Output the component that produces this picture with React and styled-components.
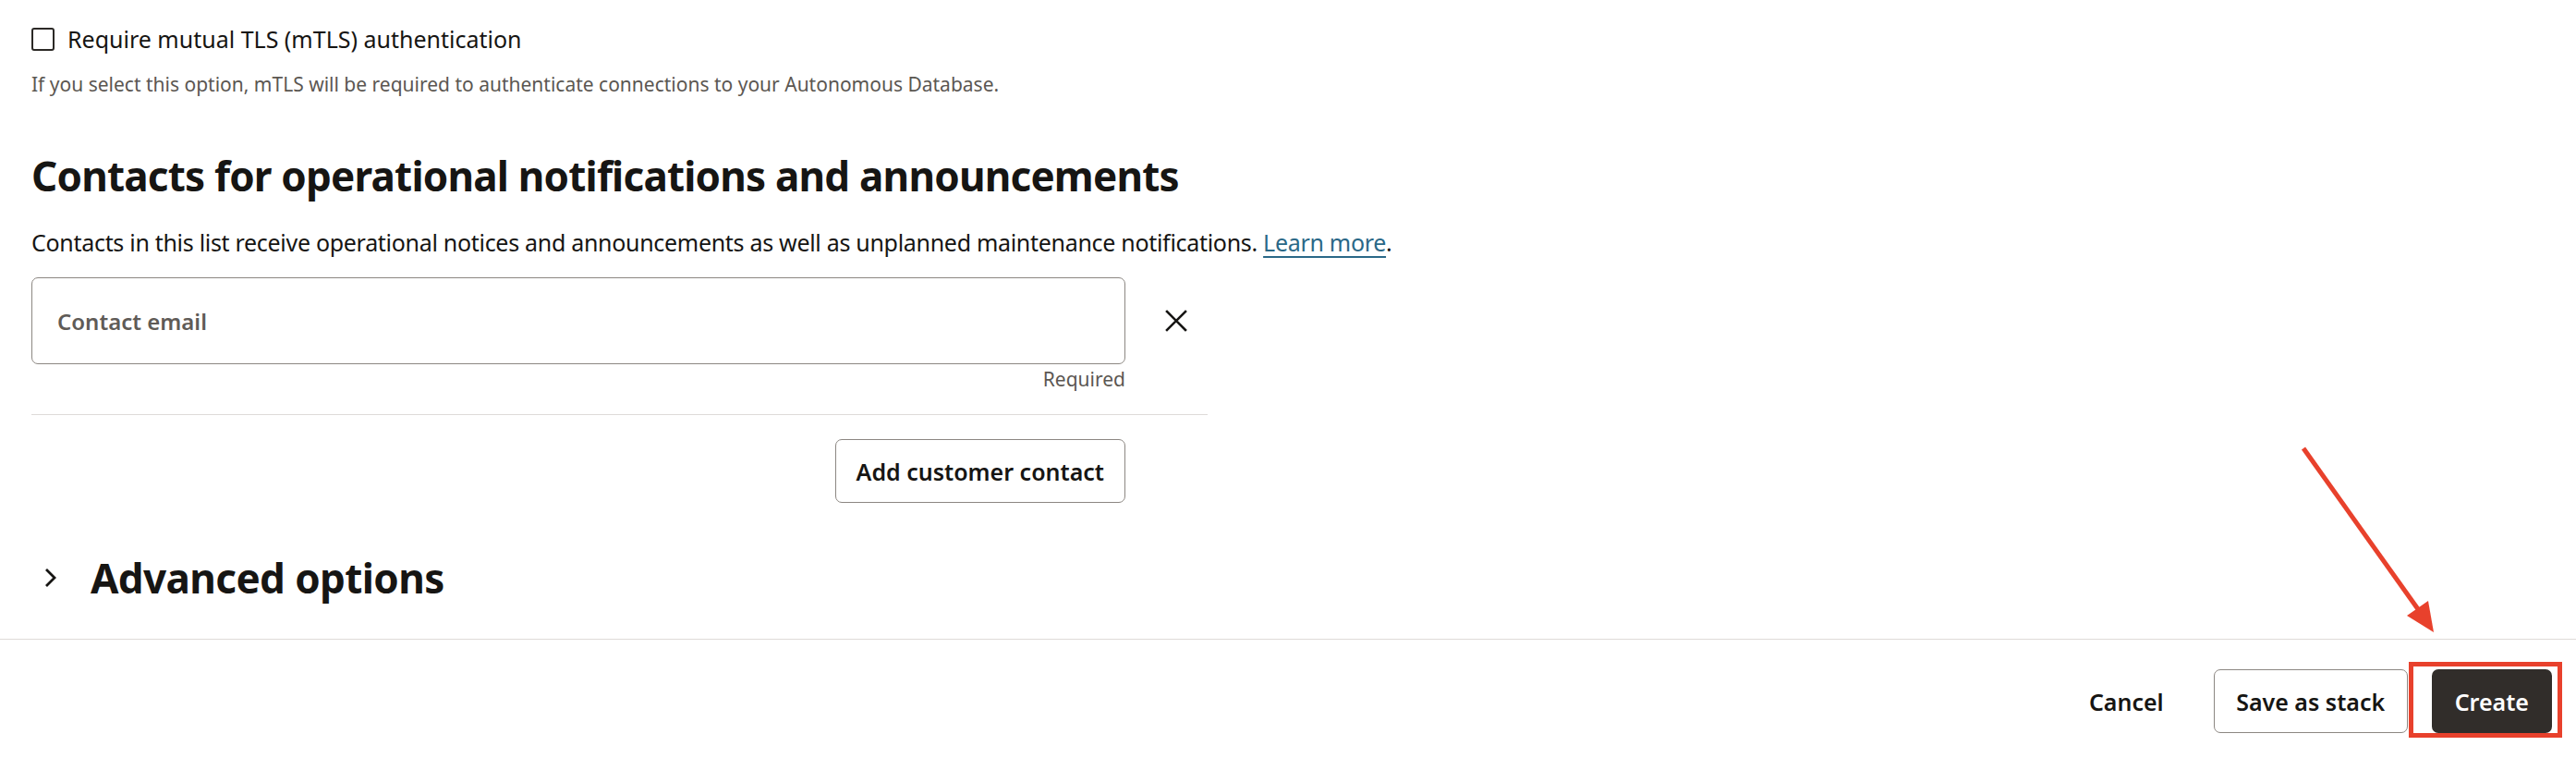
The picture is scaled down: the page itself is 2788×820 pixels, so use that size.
import React from "react";
import styled, { createGlobalStyle } from "styled-components";

const GlobalStyle = createGlobalStyle`
  html, body {
    margin: 0;
    padding: 0;
    background: #ffffff;
  }
  body {
    font-family: "Noto Sans", "Open Sans", sans-serif;
    color: #161513;
  }
`;

const Page = styled.div`
  position: relative;
  display: flex;
  flex-direction: column;
  width: 2788px;
  height: 820px;
  overflow: hidden;
`;

const Content = styled.div`
  flex: 1;
  min-height: 0;
  overflow: hidden;
  padding: 30px 0 0 34px;
`;

const Column = styled.div`
  width: 1273px;
  display: flex;
  flex-direction: column;
`;

const CheckRow = styled.label`
  display: flex;
  align-items: center;
  gap: 14px;
  height: 24px;
  font-size: 25px;
  line-height: 24px;
`;

const CheckBox = styled.span`
  width: 21px;
  height: 21px;
  border: 2px solid #2b2926;
  border-radius: 3px;
  flex: none;
`;

const Helper = styled.p`
  margin: 21px 0 0;
  font-size: 21px;
  line-height: 32px;
  color: #5b5752;
`;

const SectionTitle = styled.h2`
  margin: 55px 0 0;
  font-size: 44px;
  line-height: 56px;
  font-weight: 700;
  letter-spacing: -0.8px;
  white-space: nowrap;
`;

const Intro = styled.p`
  margin: 26px 0 0;
  font-size: 25px;
  line-height: 36px;
  letter-spacing: -0.3px;
  white-space: nowrap;
`;

const Link = styled.a`
  color: #2a6887;
  text-decoration: underline;
  text-decoration-thickness: 2px;
  text-underline-offset: 5px;
`;

const FieldRow = styled.div`
  display: flex;
  gap: 20px;
  margin-top: 20px;
`;

const Field = styled.div`
  flex: 1;
  display: flex;
  flex-direction: column;
  align-items: flex-end;
`;

const Input = styled.div`
  box-sizing: border-box;
  width: 100%;
  height: 94px;
  border: 1.5px solid #8c8782;
  border-radius: 7px;
  display: flex;
  align-items: center;
  padding-left: 27px;
  font-size: 24px;
  font-weight: 600;
  color: #5f5b57;
`;

const Hint = styled.span`
  margin-top: 2px;
  font-size: 21px;
  line-height: 28px;
  color: #5b5752;
`;

const IconButton = styled.button`
  width: 69px;
  height: 94px;
  border: 0;
  background: none;
  padding: 0;
  display: flex;
  align-items: center;
  justify-content: center;
  color: #161513;
`;

const Divider = styled.div`
  margin-top: 24px;
  height: 1px;
  background: #dedbd8;
`;

const AddRow = styled.div`
  display: flex;
  justify-content: flex-end;
  padding-right: 89px;
  margin-top: 26px;
`;

const Button = styled.button`
  box-sizing: border-box;
  height: 69px;
  padding: 0 ${(p) => p.$pad || 27}px;
  border-radius: 7px;
  font-family: "Noto Sans", "Open Sans", sans-serif;
  font-size: 25px;
  font-weight: 600;
  white-space: nowrap;
  cursor: pointer;
  border: ${(p) =>
    p.$variant === "ghost" || p.$variant === "primary"
      ? "1.5px solid transparent"
      : "1.5px solid #8c8782"};
  background: ${(p) => (p.$variant === "primary" ? "#312d2a" : "#ffffff")};
  color: ${(p) => (p.$variant === "primary" ? "#ffffff" : "#161513")};
`;

const Advanced = styled.div`
  display: flex;
  align-items: center;
  gap: 36px;
  margin-top: 53px;
  padding-left: 14px;
`;

const AdvancedTitle = styled.h2`
  margin: 0;
  font-size: 44px;
  line-height: 56px;
  font-weight: 700;
  letter-spacing: -0.6px;
`;

const Footer = styled.div`
  flex: none;
  height: 129px;
  border-top: 1px solid #dedbd8;
  display: flex;
  justify-content: flex-end;
  align-items: flex-start;
  gap: 26px;
  padding: 32px 26px 0 0;
  box-sizing: border-box;
`;

const Highlight = styled.div`
  position: relative;
`;

const RedBox = styled.span`
  position: absolute;
  left: -25px;
  right: -11px;
  top: -8px;
  bottom: -5px;
  border: 5px solid #e8412c;
  pointer-events: none;
`;

const Arrow = styled.svg`
  position: absolute;
  left: 0;
  top: 0;
  pointer-events: none;
`;

function XIcon() {
  return (
    <svg width="24" height="24" viewBox="0 0 24 24" fill="none">
      <path d="M2 2 L22 22 M22 2 L2 22" stroke="currentColor" strokeWidth="2.6" strokeLinecap="square" />
    </svg>
  );
}

function Chevron() {
  return (
    <svg width="14" height="22" viewBox="0 0 14 22" fill="none">
      <path d="M2 2 L11 11 L2 20" stroke="#161513" strokeWidth="2.8" />
    </svg>
  );
}

export default function App() {
  return (
    <>
      <GlobalStyle />
      <Page>
        <Content>
          <Column>
            <CheckRow>
              <CheckBox />
              Require mutual TLS (mTLS) authentication
            </CheckRow>
            <Helper>
              If you select this option, mTLS will be required to authenticate connections to your Autonomous Database.
            </Helper>

            <SectionTitle>Contacts for operational notifications and announcements</SectionTitle>
            <Intro>
              Contacts in this list receive operational notices and announcements as well as unplanned maintenance
              notifications. <Link href="#">Learn more</Link>.
            </Intro>

            <FieldRow>
              <Field>
                <Input>Contact email</Input>
                <Hint>Required</Hint>
              </Field>
              <IconButton aria-label="Remove">
                <XIcon />
              </IconButton>
            </FieldRow>
            <Divider />
            <AddRow>
              <Button $pad={22}>Add customer contact</Button>
            </AddRow>

            <Advanced>
              <Chevron />
              <AdvancedTitle>Advanced options</AdvancedTitle>
            </Advanced>
          </Column>
        </Content>

        <Footer>
          <Button $variant="ghost">Cancel</Button>
          <Button $pad={23.5}>Save as stack</Button>
          <Highlight>
            <Button $variant="primary" $pad={24}>Create</Button>
            <RedBox />
          </Highlight>
        </Footer>

        <Arrow width="2788" height="820">
          <line x1="2493" y1="485" x2="2617" y2="659" stroke="#e8412c" strokeWidth="5" />
          <polygon points="2634,684 2605,666 2628,650" fill="#e8412c" />
        </Arrow>
      </Page>
    </>
  );
}
